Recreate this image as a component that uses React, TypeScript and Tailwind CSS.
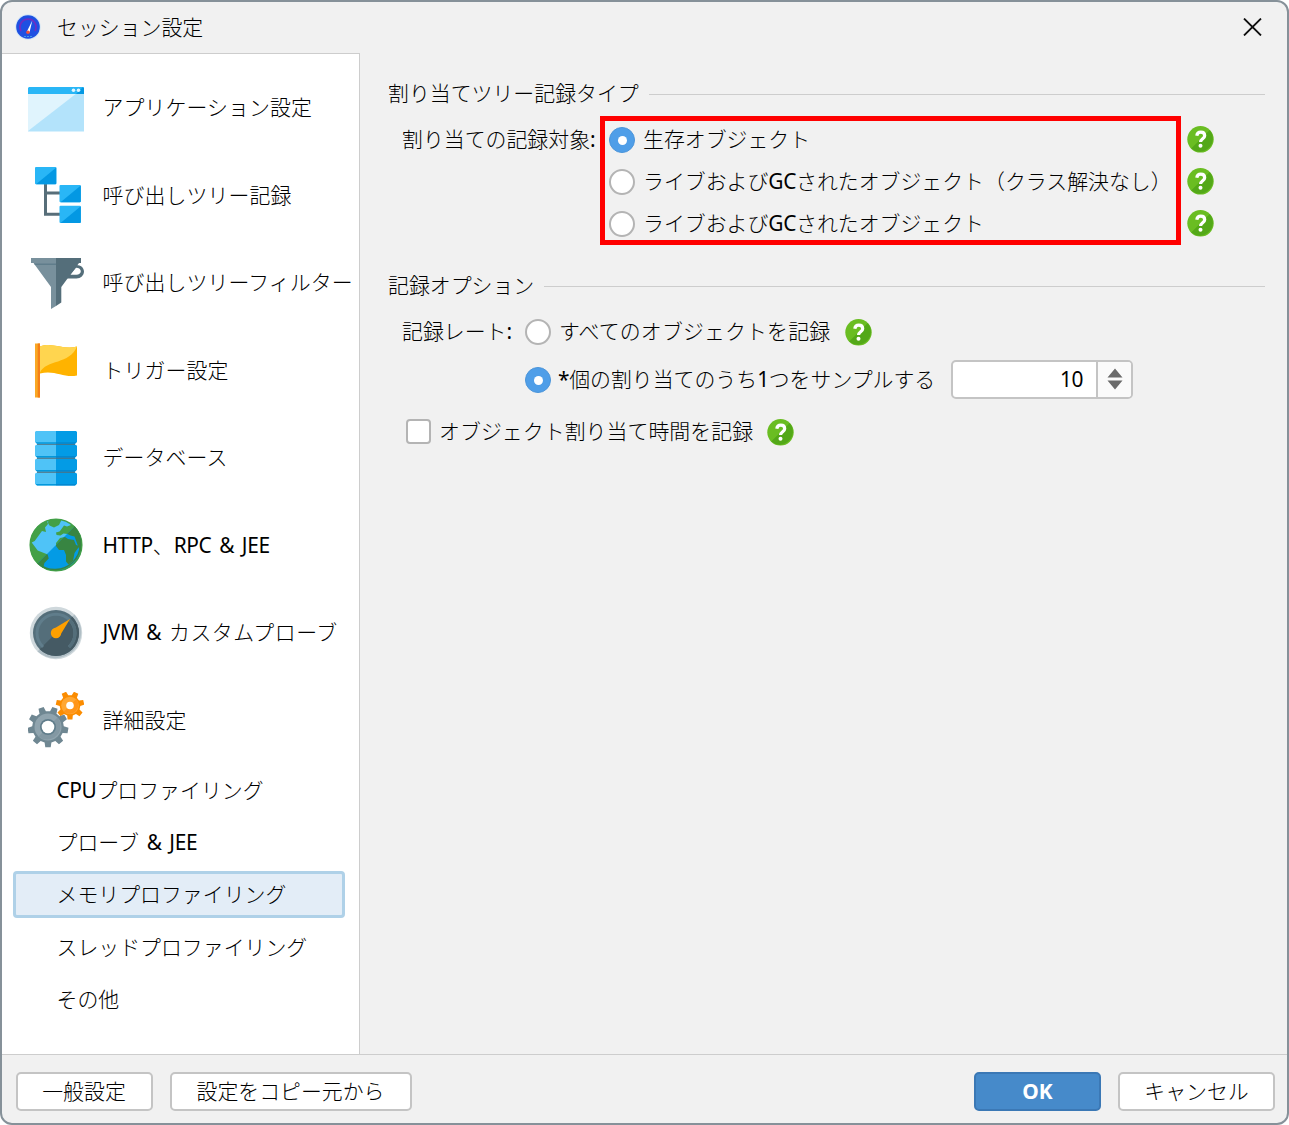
import type { ReactNode } from 'react';
import { clsx } from 'clsx';

const jpFont = "font-['Noto_Sans','Noto_Sans_CJK_JP',sans-serif]";

const gearPath = (cx: number, cy: number, outer: number, inner: number, teeth: number) => {
  const pts: string[] = [];
  const step = (Math.PI * 2) / teeth;
  const at = (r: number, a: number) => `${(cx + r * Math.cos(a)).toFixed(2)} ${(cy + r * Math.sin(a)).toFixed(2)}`;
  for (let i = 0; i < teeth; i++) {
    const a = i * step + Math.PI / 2;
    pts.push(at(inner, a - step * 0.31), at(outer, a - step * 0.19), at(outer, a + step * 0.19), at(inner, a + step * 0.31));
  }
  return `M${pts.join('L')}Z`;
};

const AppIcon = () => (
  <svg width="56" height="56" viewBox="0 0 56 56">
    <path d="M0 13h56v38.5H0z" fill="#B3E3FB" />
    <path d="M0 13h49L0 51z" fill="#E0F4FD" />
    <path d="M1 7h54l1 1v6H0V8z" fill="#29B6F6" />
    <path d="M55 7l1 1v6h-8z" fill="#0398E3" />
    <circle cx="45.5" cy="10.3" r="1.8" fill="#E1F5FE" />
    <circle cx="50.5" cy="10.3" r="1.8" fill="#E1F5FE" />
  </svg>
);

const TreeIcon = () => (
  <svg width="56" height="56" viewBox="0 0 56 56">
    <path d="M17.5 17v30.3H33M17.5 26H33" fill="none" stroke="#576E79" strokeWidth="3" />
    {[
      [7, 0],
      [31.5, 18],
      [31.5, 38.8],
    ].map(([x, y]) => (
      <g key={y} transform={`translate(${x} ${y})`}>
        <rect width="21.3" height="17.2" rx="1" fill="#29B6F6" />
        <path d="M21.3 .5v15.7q0 1-1 1H1z" fill="#0398E3" />
      </g>
    ))}
  </svg>
);

const FilterIcon = () => (
  <svg width="56" height="56" viewBox="0 0 56 56">
    <path
      d="M45 10h3.5c4.2 0 7.5 2.8 7.5 6.5s-3.2 7-7.5 7H39zM48 12.8l-5.7 6.9h6.2c2.3 0 4.3-1.3 4.3-3.4 0-1.9-1.7-3.5-4.8-3.5z"
      fill="#546E7A"
      fillRule="evenodd"
    />
    <path d="M3 3h25v48l-5 3V32L5.5 8H3z" fill="#78909C" />
    <path d="M28 3h25v5h-2L33.3 32v15.5L28 51z" fill="#546E7A" />
    <path d="M6 8.5h22V10H7z" fill="#607D8B" />
  </svg>
);

const FlagIcon = () => (
  <svg width="56" height="56" viewBox="0 0 56 56">
    <path d="M12 4.500c12-5 24 4 37 0v29c-13 3-22-6-37-2z" fill="#FFB300" />
    <path d="M12 4.500c12-5 24 4 37 0-7 18-31 13-37 26z" fill="#FFD54F" />
    <path d="M7 1.500h5v54H7z" fill="#F9A825" />
    <path d="M9.700 1.500H12v54H9.700z" fill="#F57F17" />
  </svg>
);

const DatabaseIcon = () => (
  <svg width="56" height="56" viewBox="0 0 56 56">
    <path d="M9 11h38v36H9z" fill="#546E7A" />
    {[1, 14.8, 28.8, 42.8].map(y => (
      <g key={y} transform={`translate(7 ${y})`}>
        <path d="M1 0h20v12.7H2L0 11V1z" fill="#4FC3F7" />
        <path d="M21 0h20l1 1v10l-2 1.7H21z" fill="#039BE5" />
        <path d="M.5 11.2H21v1.5H2z" fill="#0398DC" />
        <path d="M21 11.2h20.5L40 12.7H21z" fill="#0288D1" />
      </g>
    ))}
  </svg>
);

const continents = [
  // Americas
  'M0 0h19v4l1 3-3 3.5 1 4.5-4-1-3.3 4.5-4 5.5-3 1.5 6 8 10 4 1 4-4.3 4.5L14 56H0z',
  // Greenland
  'M21 0h12v4l-2 4-5 2.5-4.5-2L20 6z',
  // Europe and Asia
  'M32 14l4-5.5 3 1 4-1.500 13-2v32l-3-1-3-8-3.500-9.500-4-1-3-1.500-4-.5-3 2-4-.5-.5-2.500 3.500-1z',
  // Africa
  'M28 26l4-5 5-1 3 2 6 1 2 5 3.500 1-5 7-1.500 8-4.500 3.500-2.500-3L38 38l-2-5h-5l-3-4z',
];

const GlobeIcon = () => (
  <svg width="56" height="56" viewBox="0 0 56 56">
    <defs>
      <clipPath id="globe">
        <circle cx="28" cy="28" r="26" />
      </clipPath>
      <clipPath id="globe-shade">
        <path d="M56 0v56H0z" />
      </clipPath>
    </defs>
    <g clipPath="url(#globe)">
      <path d="M0 0h56v56H0z" fill="#4FC3F7" />
      {continents.map(d => (
        <path key={d} d={d} fill="#43A047" />
      ))}
      <g clipPath="url(#globe-shade)">
        <path d="M0 0h56v56H0z" fill="#039BE5" />
        {continents.map(d => (
          <path key={d} d={d} fill="#388542" />
        ))}
      </g>
    </g>
    <circle cx="28" cy="28" r="25.8" fill="none" stroke="#43A047" strokeWidth="1.5" />
    <path d="M46.2 9.8A25.8 25.8 0 0 1 9.8 46.2" fill="none" stroke="#388542" strokeWidth="1.5" />
  </svg>
);

const GaugeIcon = () => (
  <svg width="56" height="56" viewBox="0 0 56 56">
    <circle cx="28" cy="28" r="26.2" fill="#CFD8DC" />
    <path d="M46.5 9.5a26.2 26.2 0 0 1-37 37z" fill="#B0BEC5" />
    <circle cx="28" cy="28" r="23" fill="#546E7A" />
    <path d="M44.3 11.7a23 23 0 0 1-32.6 32.6z" fill="#455A64" />
    <path d="M15 42a19 19 0 1 1 26 0" fill="none" stroke="#607D8B" strokeWidth="3" />
    <path d="M41.8 15a19 19 0 0 1-.8 27" fill="none" stroke="#546E7A" strokeWidth="3" />
    <path d="M25 24.2L42 14 32 30.5z" fill="#FFA000" />
    <circle cx="28" cy="28" r="5.2" fill="#FFA000" />
  </svg>
);

const GearsIcon = () => (
  <svg width="56" height="56" viewBox="0 0 56 56">
    <path d={gearPath(42, 13.5, 14.3, 10.3, 7)} fill="#FB8C00" />
    <circle cx="42" cy="13.5" r="8.8" fill="#FFA733" />
    <path d="M48.2 7.3a8.8 8.8 0 0 1-12.4 12.4z" fill="#FF9519" />
    <circle cx="42" cy="13.5" r="3.8" fill="#fff" />
    <path d={gearPath(20, 35, 20.5, 15.8, 9)} fill="#6F8792" />
    <circle cx="20" cy="35" r="13.5" fill="#90A4AE" />
    <path d="M29.5 25.5a13.5 13.5 0 0 1-19 19z" fill="#8398A3" />
    <circle cx="20" cy="35" r="8" fill="#607D8B" />
    <circle cx="20" cy="35" r="6.3" fill="#fff" />
  </svg>
);

const LogoIcon = () => (
  <svg width="26" height="28" viewBox="0 0 26 28">
    <circle cx="13" cy="13" r="12.7" fill="#CFE4F5" />
    <circle cx="13" cy="13" r="11.8" fill="#1E50E2" />
    <path d="M6 17a8 8 0 1 1 14 0" fill="none" stroke="#6B2FC4" strokeWidth="1.8" />
    <path d="M17.3 6.5l-2.8 12-2.6-1z" fill="#fff" />
    <circle cx="13" cy="18.3" r="1.8" fill="#F0503C" />
    <path d="M9 22.5h8" stroke="#3E9BE8" strokeWidth="1" strokeDasharray="2 1" />
  </svg>
);

const HelpIcon = () => (
  <svg width="28" height="28" viewBox="0 0 28 28" className="shrink-0">
    <circle cx="13.5" cy="14.3" r="13.2" fill="#6ABD22" />
    <path d="M22.8 5a13.2 13.2 0 0 1-18.6 18.6z" fill="#53A818" />
    <path
      d="M9.8 10.8c.3-2.5 1.8-3.7 4-3.7 2.4 0 3.9 1.4 3.9 3.6 0 3-4.1 3.1-4.1 6.3"
      fill="none"
      stroke="#fff"
      strokeWidth="3.2"
    />
    <circle cx="13.5" cy="20.7" r="2" fill="#fff" />
  </svg>
);

const sections = [
  { label: 'アプリケーション設定', icon: <AppIcon /> },
  { label: '呼び出しツリー記録', icon: <TreeIcon /> },
  { label: '呼び出しツリーフィルター', icon: <FilterIcon /> },
  { label: 'トリガー設定', icon: <FlagIcon /> },
  { label: 'データベース', icon: <DatabaseIcon /> },
  { label: 'HTTP、RPC & JEE', icon: <GlobeIcon /> },
  { label: 'JVM & カスタムプローブ', icon: <GaugeIcon />, wide: true },
  { label: '詳細設定', icon: <GearsIcon /> },
];

const subSections = ['CPUプロファイリング', 'プローブ & JEE', 'メモリプロファイリング', 'スレッドプロファイリング', 'その他'];

// Latin runs are set heavier than the kana and kanji around them
const Label = ({ text }: { text: string }) => (
  <span className="whitespace-pre">
    {text.split(/([ -~]+)/).map((part, i) =>
      i % 2 ? (
        <span key={i} className="font-normal tracking-[-0.4px] [word-spacing:2.8px]">
          {part}
        </span>
      ) : (
        part
      ),
    )}
  </span>
);

const Radio = ({ checked }: { checked?: boolean }) => (
  <span
    className={clsx(
      'flex items-center justify-center w-[26px] h-[26px] rounded-full shrink-0',
      checked ? 'bg-[#4F9EE8] border border-[#4A94DA]' : 'bg-white border-2 border-[#B4B4B4]',
    )}
  >
    {checked && <span className="w-[9px] h-[9px] rounded-full bg-white" />}
  </span>
);

const GroupTitle = ({ text }: { text: string }) => (
  <div className="flex items-center gap-2.5 h-8">
    <Label text={text} />
    <div className="flex-1 h-px bg-[#CDCDCD]" />
  </div>
);

const Button = ({ children, className }: { children: ReactNode; className?: string }) => (
  <button
    className={clsx('flex items-center justify-center h-[39px] rounded-[5px] border-2 leading-none', className ?? '')}
  >
    {children}
  </button>
);

const App = () => {
  const selected = 'メモリプロファイリング';

  return (
    <div className="w-[1289px] h-[1125px] bg-white">
      <div
        className={clsx(
          'flex flex-col w-full h-full bg-[#F1F1F1] border-2 border-[#869199] rounded-xl overflow-hidden text-[20.9px] font-light text-black',
          jpFont,
        )}
      >
        {/* Title bar */}
        <div className="flex items-center h-[51px] shrink-0 pl-[13px] pr-[25px]">
          <LogoIcon />
          <div className="ml-4 flex-1">
            <Label text="セッション設定" />
          </div>
          <svg width="19" height="18" viewBox="0 0 19 18" className="mb-0.5">
            <path d="M1 .5l17 17M18 .5l-17 17" stroke="#111" strokeWidth="1.8" />
          </svg>
        </div>

        <div className="flex flex-1 min-h-0">
          {/* Sidebar */}
          <div className="w-[358px] shrink-0 bg-white border-t border-r border-[#CDCDCD] pt-[10px]">
            {sections.map(s => (
              <div key={s.label} className="flex items-center h-[87.5px] pl-[26px] gap-[18.5px]">
                <div className="shrink-0">{s.icon}</div>
                <div className={s.wide ? 'tracking-[0.5px]' : 'tracking-[0.1px]'}>
                  <Label text={s.label} />
                </div>
              </div>
            ))}
            {subSections.map(s => (
              <div key={s} className="flex items-center h-[52.4px] px-[11px]">
                <div
                  className={clsx(
                    'flex items-center w-[332px] h-[47px] pl-[40.5px] border-[3px] rounded-[4px]',
                    s === selected ? 'bg-[#E3EDF7] border-[#AFD1E8]' : 'border-transparent',
                  )}
                >
                  <Label text={s} />
                </div>
              </div>
            ))}
          </div>

          {/* Memory profiling options */}
          <div className="flex-1 pl-7 pr-[22px] pt-[25px]">
            <GroupTitle text="割り当てツリー記録タイプ" />
            <div className="flex mt-[6px] ml-[14px]">
              <div className="w-[198px] h-[26px] mt-[11px] flex items-center">
                <Label text="割り当ての記録対象:" />
              </div>
              <div className="flex flex-col gap-4 w-[581px] h-[129px] border-[5px] border-[#FF0000] pt-[6px] pl-1">
                {['生存オブジェクト', 'ライブおよびGCされたオブジェクト（クラス解決なし）', 'ライブおよびGCされたオブジェクト'].map((t, i) => (
                  <div key={t} className="flex items-center gap-2 h-[26px]">
                    <Radio checked={i === 0} />
                    <Label text={t} />
                  </div>
                ))}
              </div>
              <div className="flex flex-col gap-[14px] pt-[9px] pl-[6px]">
                <HelpIcon />
                <HelpIcon />
                <HelpIcon />
              </div>
            </div>

            <div className="mt-[25px]">
              <GroupTitle text="記録オプション" />
            </div>
            <div className="flex items-center h-[28px] mt-4 ml-[14px]">
              <div className="w-[123px]">
                <Label text="記録レート:" />
              </div>
              <Radio />
              <div className="ml-2 mr-[15px] tracking-[0.15px]">
                <Label text="すべてのオブジェクトを記録" />
              </div>
              <HelpIcon />
            </div>
            <div className="flex items-center h-[40px] mt-[14px] ml-[137px]">
              <Radio checked />
              <div className="ml-[7px] w-[393px]">
                <Label text="*個の割り当てのうち1つをサンプルする" />
              </div>
              <div className="flex w-[182px] h-[39px] mb-0.5 bg-white border-2 border-[#C4C4C4] rounded-[5px] overflow-hidden">
                <div className="flex-1 flex items-center justify-end pt-0.5 pr-[13px]">
                  <Label text="10" />
                </div>
                <div className="w-[35px] flex items-center justify-center bg-[#FAFAFA] border-l-2 border-[#C4C4C4]">
                  <svg width="16" height="22" viewBox="0 0 16 22">
                    <path d="M8 .5L15.5 9.5H.5zM8 21.5L15.5 12.5H.5z" fill="#6A6A6A" />
                  </svg>
                </div>
              </div>
            </div>
            <div className="flex items-center h-[28px] mt-[18px] ml-[18px]">
              <span className="w-[25px] h-[25px] mb-0.5 bg-white border-2 border-[#B4B4B4] rounded-[4px]" />
              <div className="ml-2 mr-[14px] tracking-[0.05px]">
                <Label text="オブジェクト割り当て時間を記録" />
              </div>
              <HelpIcon />
            </div>
          </div>
        </div>

        {/* Footer */}
        <div className="flex items-center h-[69px] shrink-0 border-t border-[#CDCDCD] pl-[13.5px] pr-3 pt-1">
          <Button className="w-[137px] mr-[17px] bg-white border-[#C4C4C4]">
            <Label text="一般設定" />
          </Button>
          <Button className="w-[242px] bg-white border-[#C4C4C4]">
            <Label text="設定をコピー元から" />
          </Button>
          <Button className="w-[127px] ml-auto mr-[17px] bg-[#468ACA] border-[#3B78B5] text-white font-bold">OK</Button>
          <Button className="w-[157px] bg-white border-[#C4C4C4]">
            <Label text="キャンセル" />
          </Button>
        </div>
      </div>
    </div>
  );
};

export default App;
